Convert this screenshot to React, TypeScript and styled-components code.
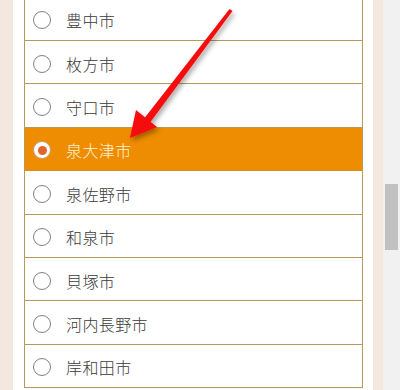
import React from 'react'
import styled, { createGlobalStyle } from 'styled-components'

const GlobalStyle = createGlobalStyle`
  html, body {
    margin: 0;
    padding: 0;
    overflow: hidden;
    background: #ffffff;
  }
  body {
    font-family: 'Noto Sans CJK JP', 'Noto Sans', sans-serif;
    color: #3a3a3a;
  }
`

const cities = [
  '豊中市',
  '枚方市',
  '守口市',
  '泉大津市',
  '泉佐野市',
  '和泉市',
  '貝塚市',
  '河内長野市',
  '岸和田市',
]

const Page = styled.div`
  position: relative;
  display: flex;
  width: 400px;
  height: 390px;
  overflow: hidden;
`

const SideBand = styled.div<{ $w: number }>`
  flex: 0 0 ${(p) => p.$w}px;
  background: #f4e7df;
`

const Content = styled.div`
  flex: 1;
  background: #fff;
  padding: 0 10px 0 11px;
`

const List = styled.ul`
  list-style: none;
  margin: -2.4px 0 0;
  padding: 0;
  border-left: 1px solid #b59b55;
  border-right: 1px solid #b59b55;
`

const Row = styled.li<{ $active?: boolean }>`
  display: flex;
  align-items: center;
  gap: 15px;
  height: 43.4px;
  box-sizing: border-box;
  padding: 3px 0 0 8px;
  border-bottom: 1px solid ${(p) => (p.$active ? '#d98a1c' : '#b59b55')};
  background: ${(p) => (p.$active ? '#ee8c02' : '#fff')};
  color: ${(p) => (p.$active ? '#fff4cf' : '#3a3a3a')};
  font-size: 16px;
  font-weight: 300;
  letter-spacing: 0.4px;
`

const Radio = styled.span<{ $checked?: boolean }>`
  position: relative;
  flex: 0 0 auto;
  width: 18px;
  height: 18px;
  box-sizing: border-box;
  border-radius: 50%;
  background: #fff;
  border: 1px solid ${(p) => (p.$checked ? '#c99a6a' : '#808080')};

  &::after {
    content: '';
    display: ${(p) => (p.$checked ? 'block' : 'none')};
    position: absolute;
    left: 3.5px;
    top: 3.5px;
    width: 9px;
    height: 9px;
    border-radius: 50%;
    background: #e2642c;
  }
`

const ScrollTrack = styled.div`
  flex: 0 0 17px;
  background: #f1f1f1;
  padding-top: 184px;
  box-sizing: border-box;
`

const ScrollThumb = styled.div`
  margin-left: 2px;
  width: 13px;
  height: 66px;
  background: #c1c1c1;
`

const Overlay = styled.svg`
  position: absolute;
  left: 0;
  top: 0;
  pointer-events: none;
`

const Arrow = () => (
  <Overlay width="400" height="390" viewBox="0 0 400 390">
    <defs>
      <filter id="sh" x="-20%" y="-20%" width="140%" height="140%">
        <feDropShadow dx="2" dy="3" stdDeviation="2.5" floodColor="#000" floodOpacity="0.35" />
      </filter>
    </defs>
    <g filter="url(#sh)" fill="#f50a0a">
      <polygon points="229.5,9 232.5,11 149,124 143,120" />
      <polygon points="130,138 136,110 157,127" />
    </g>
  </Overlay>
)

const App = () => {
  return (
    <>
      <GlobalStyle />
      <Page>
        <SideBand $w={13} />
        <Content>
          <List>
            {cities.map((c) => {
              const active = c === '泉大津市'
              return (
                <Row key={c} $active={active}>
                  <Radio $checked={active} />
                  {c}
                </Row>
              )
            })}
          </List>
        </Content>
        <SideBand $w={10} />
        <ScrollTrack>
          <ScrollThumb />
        </ScrollTrack>
        <Arrow />
      </Page>
    </>
  )
}

export default App
